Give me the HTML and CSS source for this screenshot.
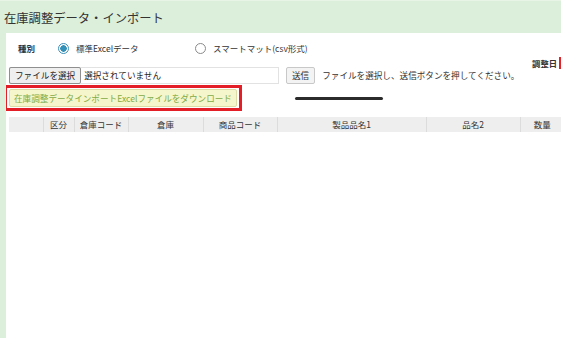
FILE: index.html
```html
<!DOCTYPE html>
<html lang="ja">
<head>
<meta charset="utf-8">
<link rel="stylesheet" href="styles.css">
</head>
<body>
<div class="page">
  <header class="title">在庫調整データ・インポート</header>
  <main class="content">
    <div class="type-row">
      <span class="label">種別</span>
      <label class="radio-opt opt1"><span class="radio checked"></span>標準Excelデータ</label>
      <label class="radio-opt opt2"><span class="radio"></span>スマートマット(csv形式)</label>
    </div>
    <div class="file-row">
      <div class="file-input">
        <span class="file-btn">ファイルを選択</span>
        <span class="file-name">選択されていません</span>
      </div>
      <span class="send-btn">送信</span>
      <span class="hint">ファイルを選択し、送信ボタンを押してください。</span>
      <span class="date-label">調整日</span>
    </div>
    <div class="dl-row">
      <div class="highlight"><span class="dl-btn">在庫調整データインポートExcelファイルをダウンロード</span></div>
      <div class="bar"></div>
    </div>
    <table class="grid">
      <colgroup>
        <col class="c0"><col class="c1"><col class="c2"><col class="c3"><col class="c4"><col class="c5"><col class="c6"><col class="c7">
      </colgroup>
      <thead>
        <tr><th></th><th>区分</th><th>倉庫コード</th><th>倉庫</th><th>商品コード</th><th>製品品名1</th><th>品名2</th><th>数量</th></tr>
      </thead>
    </table>
  </main>
</div>
</body>
</html>
```

FILE: styles.css
```css
html, body {
  margin: 0;
  padding: 0;
  background: #ffffff;
}
body {
  font-family: "Noto Sans CJK JP", "Noto Sans", sans-serif;
  color: #333333;
  width: 561px;
  height: 338px;
  overflow: hidden;
}
.page {
  background: #dcefda;
  height: 338px;
  display: flex;
  flex-direction: column;
  border-top: 1px solid #e8f4e6;
  box-sizing: border-box;
}
.title {
  height: 32px;
  font-size: 12.3px;
  line-height: 34px;
  padding-left: 4px;
  color: #333;
}
.content {
  flex: 1;
  margin-left: 6px;
  background: #ffffff;
  padding: 7px 0 0 3px;
  overflow: hidden;
}
.type-row {
  display: flex;
  align-items: center;
  height: 16px;
  font-size: 8.5px;
}
.label {
  font-weight: bold;
  margin-left: 9px;
  width: 40px;
}
.radio-opt {
  display: flex;
  align-items: center;
}
.opt1 { width: 137px; }
.radio {
  width: 11px;
  height: 11px;
  border: 1px solid #8a8a8a;
  border-radius: 50%;
  box-sizing: border-box;
  margin-right: 7px;
  background: #fff;
}
.radio.checked {
  border: 1px solid #3d8fb8;
  background: radial-gradient(circle, #3391b9 0, #3391b9 3px, #ffffff 3.5px);
}
.file-row {
  display: flex;
  align-items: flex-start;
  margin-top: 11px;
  font-size: 8.6px;
  height: 19px;
}
.file-input {
  display: flex;
  width: 270px;
  height: 17px;
  border: 1px solid #e2e2e2;
  box-sizing: border-box;
}
.file-btn {
  background: #efefef;
  border: 1px solid #8f8f8f;
  border-radius: 2px;
  margin: -1px 0 0 -1px;
  height: 17px;
  box-sizing: border-box;
  padding: 0 5px;
  line-height: 15px;
  color: #222;
}
.file-name {
  padding-left: 3px;
  line-height: 15px;
  color: #222;
}
.send-btn {
  margin-left: 7px;
  height: 17px;
  box-sizing: border-box;
  border: 1px solid #c8c8c8;
  border-radius: 2px;
  background: #f3f3f3;
  padding: 0 5px;
  line-height: 15px;
}
.hint {
  margin-left: 7px;
  line-height: 17px;
}
.date-label {
  margin-left: auto;
  margin-top: -10px;
  font-weight: bold;
  font-size: 8.3px;
  line-height: 12px;
  padding-right: 2px;
  border-right: 2px solid #e0242a;
}
.dl-row {
  display: flex;
  align-items: center;
  margin-left: -5px;
  margin-top: -1px;
}
.highlight {
  border: 3px solid #e41e26;
  padding: 1px 2px;
}
.dl-btn {
  display: block;
  background: #f6f6cc;
  border: 1px solid #dcdca6;
  border-radius: 2px;
  color: #7fab45;
  font-size: 8.6px;
  line-height: 16px;
  padding: 0 4px;
}
.bar {
  margin-left: 53px;
  width: 88px;
  height: 3px;
  border-radius: 2px;
  background: #2b2b2b;
}
.grid {
  margin-top: 6px;
  border-collapse: collapse;
  table-layout: fixed;
  width: 555px;
  font-size: 8.5px;
}
.c0 { width: 34px; }
.c1 { width: 31px; }
.c2 { width: 54px; }
.c3 { width: 75px; }
.c4 { width: 74px; }
.c5 { width: 149px; }
.c6 { width: 94px; }
.c7 { width: 44px; }
.grid th {
  background: #eeeeee;
  border-right: 1px solid #dcdcdc;
  font-weight: normal;
  height: 15px;
  padding: 0;
  text-align: center;
  line-height: 15px;
  color: #333;
}
.grid th:last-child { border-right: none; }
```
